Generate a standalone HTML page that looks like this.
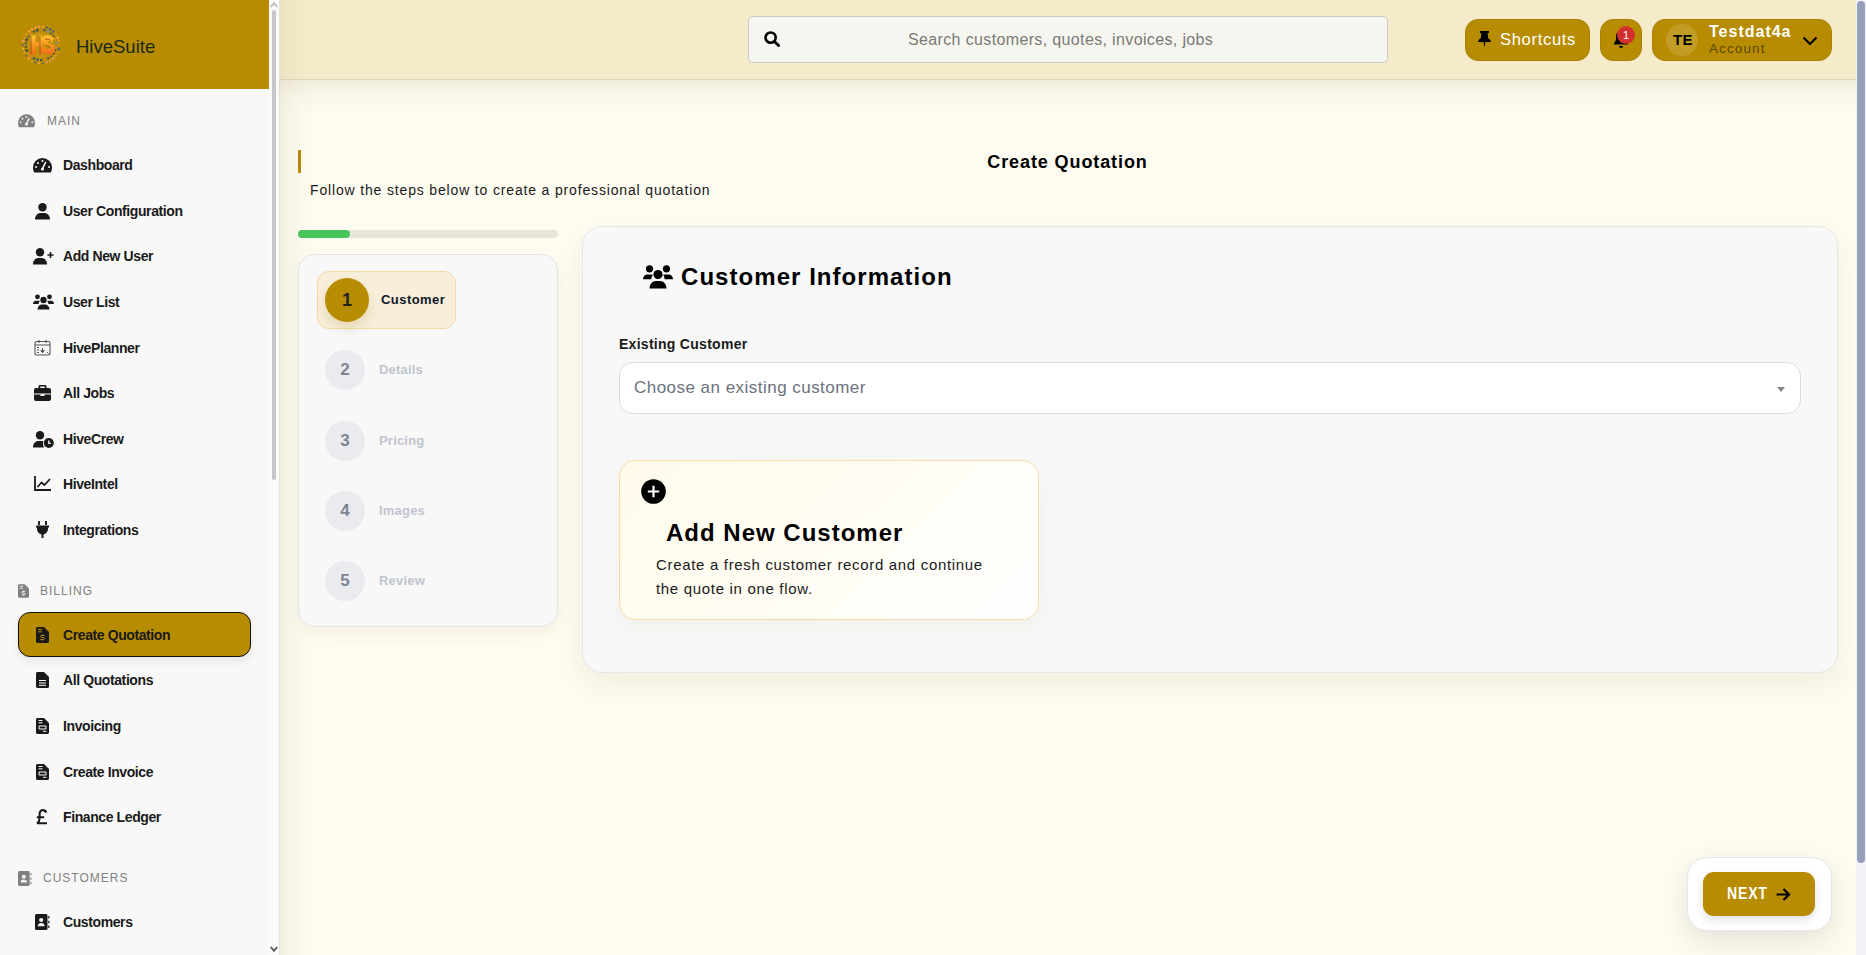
<!DOCTYPE html>
<html><head><meta charset="utf-8">
<style>
*{box-sizing:border-box;margin:0;padding:0}
html,body{width:1866px;height:955px;overflow:hidden;font-family:"Liberation Sans",sans-serif;background:#FEFBF0}
.abs{position:absolute}
#sb{position:absolute;left:0;top:0;width:269px;height:955px;background:#F8F8F8}
#sbhead{position:absolute;left:0;top:0;width:269px;height:89px;background:#B88C00}
#sbscroll{position:absolute;left:269px;top:0;width:10px;height:955px;background:#FAFAFA}
.sect{position:absolute;left:18px;height:16px;font-size:12px;letter-spacing:1px;color:#808080;display:flex;align-items:center}
.item{position:absolute;left:33px;height:20px;font-size:14px;letter-spacing:-.4px;font-weight:bold;color:#1a1a1a;display:flex;align-items:center}
.item svg{position:absolute;left:0}
.item span{position:absolute;left:30px;white-space:nowrap}
#main{position:absolute;left:279px;top:0;width:1577px;height:955px;background:#FEFBF0}
#top{position:absolute;left:279px;top:0;width:1577px;height:80px;background:#F5EBCB;border-bottom:1px solid #DDD6C0}
#pscroll{position:absolute;left:1856px;top:0;width:10px;height:955px;background:#F1F3F8}
#pthumb{position:absolute;left:1857px;top:1px;width:8px;height:862px;background:#96A0B8;border-radius:4px}
</style></head>
<body>
<div id="main"></div>
<div id="top"></div>

<!-- sidebar shadow on main -->
<div class="abs" style="left:279px;top:0;width:1px;height:955px;background:#E6E4DC"></div>
<div class="abs" style="left:280px;top:0;width:40px;height:955px;background:linear-gradient(90deg,rgba(200,190,150,.2),rgba(200,190,150,.1) 25%,rgba(200,190,150,.03) 60%,rgba(200,190,150,0))"></div>
<div class="abs" style="left:279px;top:80px;width:1577px;height:34px;background:linear-gradient(180deg,rgba(190,180,140,.2),rgba(190,180,140,.07) 40%,rgba(190,180,140,0))"></div>

<!-- header content -->
<div class="abs" style="left:748px;top:16px;width:640px;height:47px;background:#F6F6F0;border:1px solid #C9C9C4;border-radius:5px"></div>
<svg class="abs" style="left:764px;top:31px" width="16" height="16" viewBox="0 0 16 16"><circle cx="6.6" cy="6.6" r="5.1" fill="none" stroke="#000" stroke-width="2.6"/><path d="M10.4 10.4L14.6 14.6" stroke="#000" stroke-width="2.8" stroke-linecap="round"/></svg>
<div class="abs" style="left:908px;top:30.5px;font-size:16px;letter-spacing:.36px;color:#7A7A76;white-space:nowrap">Search customers, quotes, invoices, jobs</div>

<div class="abs" style="left:1465px;top:19px;width:125px;height:42px;background:#B88C00;border:1px solid #A98000;border-radius:13px"></div>
<svg class="abs" style="left:1478px;top:31px" width="13" height="17" viewBox="0 0 13 17"><path d="M2 0h9v2H9.6l.6 5.2c1.6.8 2.6 2.2 2.8 3.8H0c.2-1.6 1.2-3 2.8-3.8L3.4 2H2z" fill="#000"/><path d="M5.5 11h2l-1 5.5z" fill="#000"/></svg>
<div class="abs" style="left:1500px;top:30px;font-size:16.5px;letter-spacing:.7px;color:#fff;white-space:nowrap">Shortcuts</div>

<div class="abs" style="left:1600px;top:19px;width:42px;height:42px;background:#B88C00;border:1px solid #A98000;border-radius:13px"></div>
<svg class="abs" style="left:1613px;top:30px" width="16" height="19" viewBox="0 0 16 19"><path d="M8 1c-3 0-5 2.3-5 5.3v3.5L1 13.5v1h14v-1l-2-3.7V6.3C13 3.3 11 1 8 1z" fill="#000"/><path d="M6 16h4c0 1.1-.9 2-2 2s-2-.9-2-2z" fill="#000"/></svg>
<div class="abs" style="left:1617px;top:25.5px;width:18px;height:18px;border-radius:50%;background:#D32F2F;color:#fff;font-size:11px;text-align:center;line-height:18px">1</div>

<div class="abs" style="left:1652px;top:19px;width:180px;height:42px;background:#B88C00;border:1px solid #A98000;border-radius:13px"></div>
<div class="abs" style="left:1666px;top:24px;width:32px;height:32px;border-radius:50%;background:rgba(255,255,255,.15)"></div>
<div class="abs" style="left:1673px;top:31px;font-size:15px;font-weight:bold;color:#000;letter-spacing:.3px">TE</div>
<div class="abs" style="left:1709px;top:23px;font-size:16px;font-weight:bold;color:#fff;letter-spacing:1px;white-space:nowrap">Testdat4a</div>
<div class="abs" style="left:1709px;top:41px;font-size:13.5px;color:rgba(0,0,0,.55);letter-spacing:1.1px;white-space:nowrap">Account</div>
<svg class="abs" style="left:1802px;top:36px" width="16" height="10" viewBox="0 0 16 10"><path d="M1.5 1.5L8 8l6.5-6.5" fill="none" stroke="#000" stroke-width="2.2"/></svg>

<!-- title -->
<div class="abs" style="left:298px;top:150px;width:3px;height:23px;background:#B8860B"></div>
<div class="abs" style="left:279px;top:152px;width:1577px;text-align:center;font-size:18px;font-weight:bold;letter-spacing:.9px;color:#000">Create Quotation</div>
<div class="abs" style="left:310px;top:182px;font-size:14px;letter-spacing:.84px;color:#1a1a1a;white-space:nowrap">Follow the steps below to create a professional quotation</div>

<!-- progress -->
<div class="abs" style="left:298px;top:230px;width:260px;height:8px;border-radius:4px;background:#E8E5DB"></div>
<div class="abs" style="left:298px;top:230px;width:52px;height:8px;border-radius:4px;background:#45C55A"></div>

<!-- steps card -->
<div class="abs" style="left:298px;top:254px;width:260px;height:373px;background:#F8F8F8;border:1px solid #E3E3E3;border-radius:17px;box-shadow:0 6px 16px rgba(120,100,40,.07)"></div>
<div class="abs" style="left:317px;top:271px;width:139px;height:58px;background:#F8EEDA;border:1px solid #F4D9A2;border-radius:12px"></div>
<div class="abs" style="left:325px;top:278px;width:44px;height:44px;border-radius:50%;background:#B88C00;box-shadow:0 6px 12px rgba(150,110,0,.18);color:#222;font-size:18px;font-weight:bold;text-align:center;line-height:44px">1</div>
<div class="abs" style="left:381px;top:292px;font-size:13px;font-weight:bold;letter-spacing:.45px;color:#111827;white-space:nowrap">Customer</div>
<div class="abs" style="left:325px;top:350px;width:40px;height:40px;border-radius:50%;background:#E9EBEF;color:#7E8493;font-size:17px;font-weight:bold;text-align:center;line-height:40px">2</div>
<div class="abs" style="left:379px;top:362px;font-size:13px;font-weight:bold;letter-spacing:.2px;color:#C0C5CF;white-space:nowrap">Details</div>
<div class="abs" style="left:325px;top:421px;width:40px;height:40px;border-radius:50%;background:#E9EBEF;color:#7E8493;font-size:17px;font-weight:bold;text-align:center;line-height:40px">3</div>
<div class="abs" style="left:379px;top:433px;font-size:13px;font-weight:bold;letter-spacing:.2px;color:#C0C5CF;white-space:nowrap">Pricing</div>
<div class="abs" style="left:325px;top:491px;width:40px;height:40px;border-radius:50%;background:#E9EBEF;color:#7E8493;font-size:17px;font-weight:bold;text-align:center;line-height:40px">4</div>
<div class="abs" style="left:379px;top:503px;font-size:13px;font-weight:bold;letter-spacing:.2px;color:#C0C5CF;white-space:nowrap">Images</div>
<div class="abs" style="left:325px;top:561px;width:40px;height:40px;border-radius:50%;background:#E9EBEF;color:#7E8493;font-size:17px;font-weight:bold;text-align:center;line-height:40px">5</div>
<div class="abs" style="left:379px;top:573px;font-size:13px;font-weight:bold;letter-spacing:.2px;color:#C0C5CF;white-space:nowrap">Review</div>

<!-- main card -->
<div class="abs" style="left:582px;top:226px;width:1256px;height:447px;background:#F8F8F8;border:1px solid #E6E6E6;border-radius:20px;box-shadow:0 12px 28px rgba(120,100,40,.09)"></div>
<svg class="abs" style="left:643px;top:265px" width="30" height="24" viewBox="0 0 30 24"><circle cx="6.5" cy="3.8" r="3.6" fill="#000"/><circle cx="23.5" cy="3.8" r="3.6" fill="#000"/><circle cx="15" cy="9.5" r="4.6" fill="#000"/><path d="M0 14.3c0-2.6 1.8-4.8 4.4-4.8h3.5c.8 0 1.5.2 2.1.5-1 1-1.6 2.5-1.6 4.2z" fill="#000"/><path d="M30 14.3c0-2.6-1.8-4.8-4.4-4.8h-3.5c-.8 0-1.5.2-2.1.5 1 1 1.6 2.5 1.6 4.2z" fill="#000"/><path d="M6.5 23.5c0-4 2.8-7.5 6.5-7.5h4c3.7 0 6.5 3.5 6.5 7.5z" fill="#000"/></svg>
<div class="abs" style="left:681px;top:263px;font-size:24px;font-weight:bold;letter-spacing:1.05px;color:#000;white-space:nowrap">Customer Information</div>
<div class="abs" style="left:619px;top:336px;font-size:14px;font-weight:bold;letter-spacing:.28px;color:#1a1a1a;white-space:nowrap">Existing Customer</div>
<div class="abs" style="left:619px;top:362px;width:1182px;height:52px;background:#fff;border:1px solid #DCDCDC;border-radius:14px"></div>
<div class="abs" style="left:634px;top:378px;font-size:17px;letter-spacing:.47px;color:#6B7280;white-space:nowrap">Choose an existing customer</div>
<svg class="abs" style="left:1777px;top:387px" width="8" height="5" viewBox="0 0 8 5"><path d="M0 0h8L4 5z" fill="#888"/></svg>

<!-- add new customer -->
<div class="abs" style="left:619px;top:460px;width:420px;height:160px;border:1px solid #F6DDA6;border-radius:16px;background:linear-gradient(135deg,#FFFAEA 0%,#FFFDF6 60%,#FFFFFF 100%);box-shadow:0 8px 20px rgba(150,120,40,.06)"></div>
<svg class="abs" style="left:641px;top:479px" width="25" height="25" viewBox="0 0 25 25"><circle cx="12.5" cy="12.5" r="12.3" fill="#000"/><path d="M12.5 6.8v11.4M6.8 12.5h11.4" stroke="#fff" stroke-width="2.2"/></svg>
<div class="abs" style="left:666px;top:519px;font-size:24px;font-weight:bold;letter-spacing:1px;color:#000;white-space:nowrap">Add New Customer</div>
<div class="abs" style="left:656px;top:553px;font-size:15px;line-height:24px;letter-spacing:.68px;color:#1a1a1a;white-space:nowrap">Create a fresh customer record and continue<br>the quote in one flow.</div>

<!-- next -->
<div class="abs" style="left:1687px;top:857px;width:145px;height:74px;background:#fff;border:1px solid #E6E6EA;border-radius:20px;box-shadow:0 10px 30px rgba(0,0,0,.10)"></div>
<div class="abs" style="left:1703px;top:872px;width:112px;height:44px;background:#B88C00;border-radius:11px;box-shadow:0 4px 10px rgba(0,0,0,.12)"></div>
<div class="abs" style="left:1727px;top:885px;font-size:16px;font-weight:bold;letter-spacing:.9px;color:#fff;transform:scaleX(.88);transform-origin:0 0">NEXT</div>
<svg class="abs" style="left:1776px;top:888px" width="15" height="13" viewBox="0 0 15 13"><path d="M0.5 6.5h12.5M7.5 1l5.5 5.5-5.5 5.5" fill="none" stroke="#000" stroke-width="2.2"/></svg>


<!-- sidebar -->
<div id="sb">
  <div id="sbhead">
    <svg class="abs" style="left:21px;top:25px" width="40" height="40" viewBox="0 0 40 40"><defs><linearGradient id="hsg" x1="0" y1="0" x2="0" y2="1"><stop offset="0" stop-color="#FFC22E"/><stop offset="1" stop-color="#F06A14"/></linearGradient></defs><circle cx="20" cy="20" r="13" fill="#E0A030" opacity=".35"/><circle cx="38.3" cy="20.0" r="0.9" fill="#EE8A3A"/><circle cx="37.9" cy="23.8" r="1.3" fill="#4A6080"/><circle cx="36.7" cy="27.4" r="0.9" fill="#F39A45"/><circle cx="34.8" cy="30.8" r="1.1" fill="#F39A45"/><circle cx="32.2" cy="33.6" r="1.3" fill="#F39A45"/><circle cx="29.2" cy="35.8" r="0.9" fill="#F5A848"/><circle cx="25.7" cy="37.4" r="1.1" fill="#F39A45"/><circle cx="21.9" cy="38.2" r="0.9" fill="#4A6080"/><circle cx="18.1" cy="38.2" r="0.9" fill="#F5A848"/><circle cx="14.3" cy="37.4" r="0.9" fill="#4A6080"/><circle cx="10.9" cy="35.8" r="0.9" fill="#F39A45"/><circle cx="7.8" cy="33.6" r="1.3" fill="#F39A45"/><circle cx="5.2" cy="30.8" r="0.9" fill="#4A6080"/><circle cx="3.3" cy="27.4" r="0.9" fill="#F5A848"/><circle cx="2.1" cy="23.8" r="1.1" fill="#F5A848"/><circle cx="1.7" cy="20.0" r="0.9" fill="#4A6080"/><circle cx="2.1" cy="16.2" r="1.3" fill="#F39A45"/><circle cx="3.3" cy="12.6" r="1.3" fill="#EE8A3A"/><circle cx="5.2" cy="9.2" r="0.9" fill="#F5A848"/><circle cx="7.8" cy="6.4" r="1.1" fill="#F5A848"/><circle cx="10.8" cy="4.2" r="1.3" fill="#F39A45"/><circle cx="14.3" cy="2.6" r="1.3" fill="#F39A45"/><circle cx="18.1" cy="1.8" r="1.3" fill="#F39A45"/><circle cx="21.9" cy="1.8" r="1.1" fill="#F5A848"/><circle cx="25.7" cy="2.6" r="1.1" fill="#4A6080"/><circle cx="29.2" cy="4.2" r="1.3" fill="#4A6080"/><circle cx="32.2" cy="6.4" r="1.1" fill="#4A6080"/><circle cx="34.8" cy="9.2" r="0.9" fill="#EE8A3A"/><circle cx="36.7" cy="12.6" r="1.3" fill="#F5A848"/><circle cx="37.9" cy="16.2" r="0.9" fill="#F5A848"/><circle cx="35.1" cy="21.7" r="1.3" fill="#E8803A"/><circle cx="34.3" cy="25.2" r="1.1" fill="#2E4868"/><circle cx="32.6" cy="28.5" r="1.1" fill="#2E4868"/><circle cx="30.2" cy="31.3" r="0.9" fill="#3E5878"/><circle cx="27.2" cy="33.4" r="0.9" fill="#2E4868"/><circle cx="23.8" cy="34.7" r="0.9" fill="#E8803A"/><circle cx="20.2" cy="35.2" r="1.1" fill="#2E4868"/><circle cx="16.5" cy="34.8" r="1.3" fill="#3E5878"/><circle cx="13.1" cy="33.5" r="1.3" fill="#3E5878"/><circle cx="10.0" cy="31.5" r="1.1" fill="#E8803A"/><circle cx="7.6" cy="28.8" r="1.3" fill="#E8803A"/><circle cx="5.8" cy="25.5" r="1.3" fill="#2E4868"/><circle cx="4.9" cy="22.0" r="0.9" fill="#2E4868"/><circle cx="4.9" cy="18.3" r="1.1" fill="#3E5878"/><circle cx="5.7" cy="14.8" r="1.3" fill="#2E4868"/><circle cx="7.4" cy="11.5" r="0.9" fill="#3E5878"/><circle cx="9.8" cy="8.7" r="1.3" fill="#E8803A"/><circle cx="12.8" cy="6.6" r="1.1" fill="#2E4868"/><circle cx="16.2" cy="5.3" r="1.3" fill="#2E4868"/><circle cx="19.8" cy="4.8" r="0.9" fill="#E8803A"/><circle cx="23.5" cy="5.2" r="1.1" fill="#2E4868"/><circle cx="26.9" cy="6.5" r="1.3" fill="#6A90B0"/><circle cx="30.0" cy="8.5" r="1.1" fill="#3E5878"/><circle cx="32.4" cy="11.2" r="0.9" fill="#3E5878"/><circle cx="34.2" cy="14.5" r="0.9" fill="#E8803A"/><circle cx="35.1" cy="18.0" r="1.1" fill="#6A90B0"/><path d="M9.5 10.5h5v7h4v-7h3v19h-3v-8h-4v8h-5z" fill="url(#hsg)"/><path d="M33 13.5c-1.5-2.3-3.8-3.2-6.2-3.2-3.4 0-5.8 2-5.8 5 0 3 2.3 4.2 5 5 2 .6 2.8 1 2.8 2 0 1-1 1.6-2.4 1.6-1.6 0-3-.8-4-2.2L21 25c1.4 2.8 3.8 4.6 6.8 4.6 3.8 0 6.4-2.2 6.4-5.4 0-3.2-2.4-4.4-5.2-5.2-1.8-.5-2.6-.9-2.6-1.8 0-.8.8-1.3 1.9-1.3 1.2 0 2.2.5 3 1.5z" fill="url(#hsg)"/><path d="M10 11v18M19 11v18" stroke="#7A3A10" stroke-width=".9" fill="none" opacity=".7"/><path d="M24 14.8c1.5-1 4-.8 5.5.7M25 20.5c2.5.8 4 1.2 4.3 2.5" stroke="#8A3A10" stroke-width=".9" fill="none" opacity=".8"/></svg>
    <div class="abs" style="left:76px;top:36px;font-size:18.5px;color:#1B2A1B">HiveSuite</div>
  </div>
<div class="item" style="top:155px"><svg width="19" height="15" viewBox="0 0 19 15" style="left:0;top:3px"><path d="M9.5 0A9.5 9.5 0 0 0 0 9.5c0 1.9.5 3.6 1.2 5h16.6c.8-1.4 1.2-3.1 1.2-5A9.5 9.5 0 0 0 9.5 0z" fill="#1a1a1a"/><circle cx="9.5" cy="3" r="1" fill="#F8F8F8"/><circle cx="5" cy="5" r="1" fill="#F8F8F8"/><circle cx="3" cy="9" r="1" fill="#F8F8F8"/><circle cx="16" cy="9" r="1" fill="#F8F8F8"/><path d="M12.5 4.5L9.8 10" stroke="#F8F8F8" stroke-width="1.6" stroke-linecap="round"/><circle cx="9.5" cy="11" r="1.6" fill="#F8F8F8"/></svg><span>Dashboard</span></div>
<div class="item" style="top:201px"><svg width="15" height="17" viewBox="0 0 15 17" style="left:2px;top:2px"><circle cx="7.5" cy="4.2" r="4.2" fill="#1a1a1a"/><path d="M0 16.5C0 12.5 2.5 10 6 10h3c3.5 0 6 2.5 6 6.5z" fill="#1a1a1a"/></svg><span>User Configuration</span></div>
<div class="item" style="top:246px"><svg width="21" height="17" viewBox="0 0 21 17" style="left:0;top:2px"><circle cx="7" cy="4.2" r="4.2" fill="#1a1a1a"/><path d="M0 16.5C0 12.5 2.3 10 5.5 10h3c3.2 0 5.5 2.5 5.5 6.5z" fill="#1a1a1a"/><path d="M17.5 4v6M14.5 7h6" stroke="#1a1a1a" stroke-width="1.6"/></svg><span>Add New User</span></div>
<div class="item" style="top:292px"><svg width="21" height="16" viewBox="0 0 21 16" style="left:0;top:2px"><circle cx="4.5" cy="2.8" r="2.4" fill="#1a1a1a"/><circle cx="16.5" cy="2.8" r="2.4" fill="#1a1a1a"/><circle cx="10.5" cy="6" r="3.2" fill="#1a1a1a"/><path d="M0 10c0-2 1-3.3 3-3.3h2.5c.5 0 1 .1 1.3.3C6 8 5.6 9 5.6 10z" fill="#1a1a1a"/><path d="M21 10c0-2-1-3.3-3-3.3h-2.5c-.5 0-1 .1-1.3.3.8 1 1.2 2 1.2 3z" fill="#1a1a1a"/><path d="M4.5 15.5c0-3 2-5 4.5-5h3c2.5 0 4.5 2 4.5 5z" fill="#1a1a1a"/></svg><span>User List</span></div>
<div class="item" style="top:338px"><svg width="17" height="17" viewBox="0 0 17 17" style="left:1px;top:1px"><rect x="1" y="2.5" width="15" height="13.5" rx="1.5" fill="none" stroke="#555" stroke-width="1.1"/><path d="M1 6h15M5 1v3M12 1v3" stroke="#555" stroke-width="1.1"/><path d="M3 8.5h2M3 11h2M3 13.5h2M8.5 9v5M6.5 11.5l2 2 2-2M13 13l1.5 1.5" stroke="#555" stroke-width="1"/></svg><span>HivePlanner</span></div>
<div class="item" style="top:383px"><svg width="17" height="16" viewBox="0 0 17 16" style="left:1px;top:2px"><path d="M6 0h5c.8 0 1.5.7 1.5 1.5V3H15c1.1 0 2 .9 2 2v3.5H0V5c0-1.1.9-2 2-2h2.5V1.5C4.5.7 5.2 0 6 0zm.2 1.6V3h4.6V1.6z" fill="#1a1a1a"/><path d="M0 9.6h6.5v1.3h4V9.6H17V14c0 1.1-.9 2-2 2H2c-1.1 0-2-.9-2-2z" fill="#1a1a1a"/></svg><span>All Jobs</span></div>
<div class="item" style="top:429px"><svg width="21" height="17" viewBox="0 0 21 17" style="left:0;top:2px"><circle cx="7" cy="4.2" r="4.2" fill="#1a1a1a"/><path d="M0 16.5C0 12.5 2.3 10 5.5 10h3.5c.5 0 1 .1 1.4.2-.3.8-.4 1.6-.4 2.5 0 1.4.4 2.7 1.1 3.8z" fill="#1a1a1a"/><circle cx="15.8" cy="12" r="5" fill="#1a1a1a"/><path d="M15.8 9.5v2.8h2" stroke="#F8F8F8" stroke-width="1.3" fill="none"/></svg><span>HiveCrew</span></div>
<div class="item" style="top:474px"><svg width="17" height="15" viewBox="0 0 17 15" style="left:1px;top:2px"><path d="M1 0v14h16" stroke="#1a1a1a" stroke-width="1.8" fill="none"/><path d="M3.5 11l4-4.5 3 2.5L16 3" stroke="#1a1a1a" stroke-width="1.8" fill="none" stroke-linejoin="round"/></svg><span>HiveIntel</span></div>
<div class="item" style="top:520px"><svg width="13" height="17" viewBox="0 0 13 17" style="left:3px;top:1px"><path d="M3 0v4M10 0v4" stroke="#1a1a1a" stroke-width="1.9"/><path d="M0 4.5h13v2h-1V8c0 2.7-2 5-4.5 5.4V17h-2v-3.6C3 13 1 10.7 1 8V6.5H0z" fill="#1a1a1a"/></svg><span>Integrations</span></div>
<div class="item" style="top:670px"><svg width="13" height="16" viewBox="0 0 13 16" style="left:3px;top:2px"><path d="M0 1.5C0 .7.7 0 1.5 0H8l5 5v9.5c0 .8-.7 1.5-1.5 1.5h-10C.7 16 0 15.3 0 14.5z" fill="#1a1a1a"/><path d="M3 8.5h7M3 11h7M3 13.3h7" stroke="#F8F8F8" stroke-width="1"/></svg><span>All Quotations</span></div>
<div class="item" style="top:716px"><svg width="13" height="16" viewBox="0 0 13 16" style="left:3px;top:2px"><path d="M0 1.5C0 .7.7 0 1.5 0H8l5 5v9.5c0 .8-.7 1.5-1.5 1.5h-10C.7 16 0 15.3 0 14.5z" fill="#1a1a1a"/><path d="M2.5 2.5h4M2.5 4.8h4M3 8h7v3H3z" stroke="#F8F8F8" stroke-width="1" fill="none"/><path d="M7 13.3h3.5" stroke="#F8F8F8" stroke-width="1"/></svg><span>Invoicing</span></div>
<div class="item" style="top:762px"><svg width="13" height="16" viewBox="0 0 13 16" style="left:3px;top:2px"><path d="M0 1.5C0 .7.7 0 1.5 0H8l5 5v9.5c0 .8-.7 1.5-1.5 1.5h-10C.7 16 0 15.3 0 14.5z" fill="#1a1a1a"/><path d="M2.5 2.5h4M2.5 4.8h4M3 8h7v3H3z" stroke="#F8F8F8" stroke-width="1" fill="none"/><path d="M7 13.3h3.5" stroke="#F8F8F8" stroke-width="1"/></svg><span>Create Invoice</span></div>
<div class="item" style="top:807px"><svg width="14" height="16" viewBox="0 0 14 16" style="left:2px;top:2px"><path d="M11.3 3.6C10.7 2 9.5 1.1 7.9 1.1 5.8 1.1 4.6 2.6 4.6 4.8V9.3c0 2.2-.8 3.8-2.6 5.2M1.8 8.2h7.4M2 14.3h10" stroke="#1a1a1a" stroke-width="2.1" fill="none"/></svg><span>Finance Ledger</span></div>
<div class="item" style="top:912px"><svg width="15" height="16" viewBox="0 0 15 16" style="left:2px;top:2px"><rect x="0" y="0" width="12.5" height="16" rx="1.5" fill="#1a1a1a"/><circle cx="6.2" cy="6" r="2.1" fill="#F8F8F8"/><path d="M2.8 12.2c0-2 1.4-3.2 3.4-3.2s3.4 1.2 3.4 3.2z" fill="#F8F8F8"/><path d="M13.8 2v2.5M13.8 6.8v2.5M13.8 11.6v2.5" stroke="#1a1a1a" stroke-width="1.2"/></svg><span>Customers</span></div>
<div class="sect" style="top:113px"><svg width="17" height="14" viewBox="0 0 19 15"><path d="M9.5 0A9.5 9.5 0 0 0 0 9.5c0 1.9.5 3.6 1.2 5h16.6c.8-1.4 1.2-3.1 1.2-5A9.5 9.5 0 0 0 9.5 0z" fill="#808080"/><circle cx="9.5" cy="3" r="1" fill="#F8F8F8"/><circle cx="5" cy="5" r="1" fill="#F8F8F8"/><circle cx="3" cy="9" r="1" fill="#F8F8F8"/><circle cx="16" cy="9" r="1" fill="#F8F8F8"/><path d="M12.5 4.5L9.8 10" stroke="#F8F8F8" stroke-width="1.6"/><circle cx="9.5" cy="11" r="1.6" fill="#F8F8F8"/></svg><span style="margin-left:12px">MAIN</span></div>
<div class="sect" style="top:583px"><svg width="11" height="14" viewBox="0 0 13 16"><path d="M0 1.5C0 .7.7 0 1.5 0H8l5 5v9.5c0 .8-.7 1.5-1.5 1.5h-10C.7 16 0 15.3 0 14.5z" fill="#808080"/><path d="M2 2.5h4M2 4.8h4" stroke="#F8F8F8" stroke-width="1"/><path d="M8.5 8.5H5.5c-.6 0-1 .4-1 1s.4 1 1 1h2c.6 0 1 .4 1 1s-.4 1-1 1H4.5M6.5 7.5v1M6.5 12.5v1" stroke="#F8F8F8" stroke-width="1" fill="none"/></svg><span style="margin-left:11px">BILLING</span></div>
<div class="sect" style="top:870px"><svg width="14" height="15" viewBox="0 0 15 16"><rect x="0" y="0" width="12.5" height="16" rx="1.5" fill="#808080"/><circle cx="6.2" cy="6" r="2.1" fill="#F8F8F8"/><path d="M2.8 12.2c0-2 1.4-3.2 3.4-3.2s3.4 1.2 3.4 3.2z" fill="#F8F8F8"/><path d="M13.8 2v2.5M13.8 6.8v2.5M13.8 11.6v2.5" stroke="#808080" stroke-width="1.2"/></svg><span style="margin-left:11px">CUSTOMERS</span></div>
<div class="abs" style="left:18px;top:612px;width:233px;height:45px;background:#B88C00;border:1px solid #111;border-radius:12px;box-shadow:0 4px 10px rgba(0,0,0,.08)"></div>
<div class="item" style="top:625px"><svg width="13" height="16" viewBox="0 0 13 16" style="left:3px;top:2px"><path d="M0 1.5C0 .7.7 0 1.5 0H8l5 5v9.5c0 .8-.7 1.5-1.5 1.5h-10C.7 16 0 15.3 0 14.5z" fill="#1a1a1a"/><path d="M8 0v5h5" fill="#B88C00" opacity=".0"/><path d="M2 2.5h4M2 4.8h4" stroke="#B88C00" stroke-width="1"/><path d="M8.5 8.5H5.5c-.6 0-1 .4-1 1s.4 1 1 1h2c.6 0 1 .4 1 1s-.4 1-1 1H4.5M6.5 7.5v1M6.5 12.5v1" stroke="#B88C00" stroke-width="1" fill="none"/></svg><span>Create Quotation</span></div>
</div><div id="sbscroll"><div class="abs" style="left:3px;top:10px;width:4px;height:470px;background:#C6C7CC;border-radius:2px"></div><svg class="abs" style="left:1px;top:1px" width="8" height="7" viewBox="0 0 8 7"><path d="M.8 6L4 2.2 7.2 6" fill="none" stroke="#BBBBBB" stroke-width="1.8"/></svg><svg class="abs" style="left:1px;top:946px" width="8" height="7" viewBox="0 0 8 7"><path d="M.8 1L4 4.8 7.2 1" fill="none" stroke="#555" stroke-width="1.8"/></svg></div>

<div id="pscroll"></div><div id="pthumb"></div>
</body></html>
